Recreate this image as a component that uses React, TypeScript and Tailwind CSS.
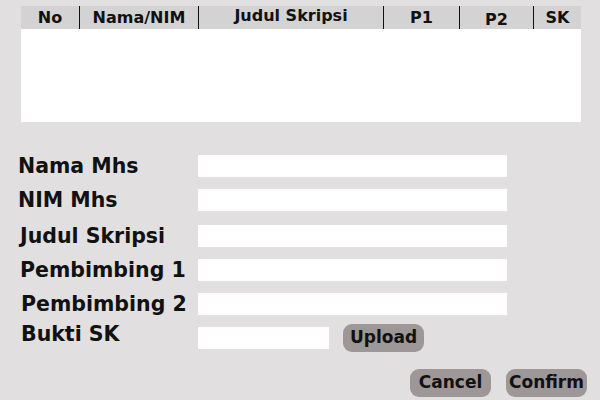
const columns = [
  { label: 'No', w: 'w-[58px]', cls: '' },
  { label: 'Nama/NIM', w: 'w-[119px]', cls: '' },
  { label: 'Judul Skripsi', w: 'w-[185px]', cls: '-translate-y-[2px]' },
  { label: 'P1', w: 'w-[76px]', cls: '' },
  { label: 'P2', w: 'w-[74px]', cls: 'translate-y-[2px]' },
  { label: 'SK', w: 'w-[48px]', cls: '' },
];

const fields = [
  { label: 'Nama Mhs', pad: 'pl-[18px]' },
  { label: 'NIM Mhs', pad: 'pl-[18px]' },
  { label: 'Judul Skripsi', pad: 'pl-[20px]' },
  { label: 'Pembimbing 1', pad: 'pl-[20px]' },
  { label: 'Pembimbing 2', pad: 'pl-[21px]' },
];

function Button({ children }: { children: React.ReactNode }) {
  return (
    <button className="h-[28px] w-[81px] rounded-[9px] bg-[#9d9797] text-[17px] font-bold text-[#111]">
      {children}
    </button>
  );
}

export default function App() {
  return (
    <div
      className="w-[600px] h-[400px] bg-[#e1dfdf] text-[#111] overflow-hidden"
      style={{ fontFamily: '"DejaVu Sans", sans-serif' }}
    >
      <div className="ml-[21px] mt-[6px] w-[560px] h-[116px] bg-white flex flex-col">
        <div className="flex h-[23px] bg-[#d3d3d3]">
          {columns.map((c, i) => (
            <div
              key={c.label}
              className={`${c.w} flex items-center justify-center ${i > 0 ? 'border-l border-[#111]' : ''}`}
            >
              <span className={`text-[16px] font-bold ${c.cls}`}>{c.label}</span>
            </div>
          ))}
        </div>
      </div>

      <div className="mt-[33px] flex flex-col">
        {fields.map((f, i) => (
          <div key={f.label} className={`flex items-center h-[22px] ${i === 0 ? '' : i === 2 ? 'mt-[14px]' : 'mt-[12px]'}`}>
            <div className={`w-[198px] ${f.pad} text-[20.5px] font-bold leading-none`}>{f.label}</div>
            <div className="w-[309px] h-[22px] bg-white" />
          </div>
        ))}
        <div className="flex items-center h-[22px] mt-[12px]">
          <div className="w-[198px] pl-[21px] text-[20.5px] font-bold leading-none -translate-y-[4px]">Bukti SK</div>
          <div className="w-[131px] h-[22px] bg-white" />
          <div className="ml-[14px]">
            <Button>Upload</Button>
          </div>
        </div>
        <div className="flex justify-end gap-[15px] pr-[13px] mt-[20px]">
          <Button>Cancel</Button>
          <Button>Confirm</Button>
        </div>
      </div>
    </div>
  );
}
